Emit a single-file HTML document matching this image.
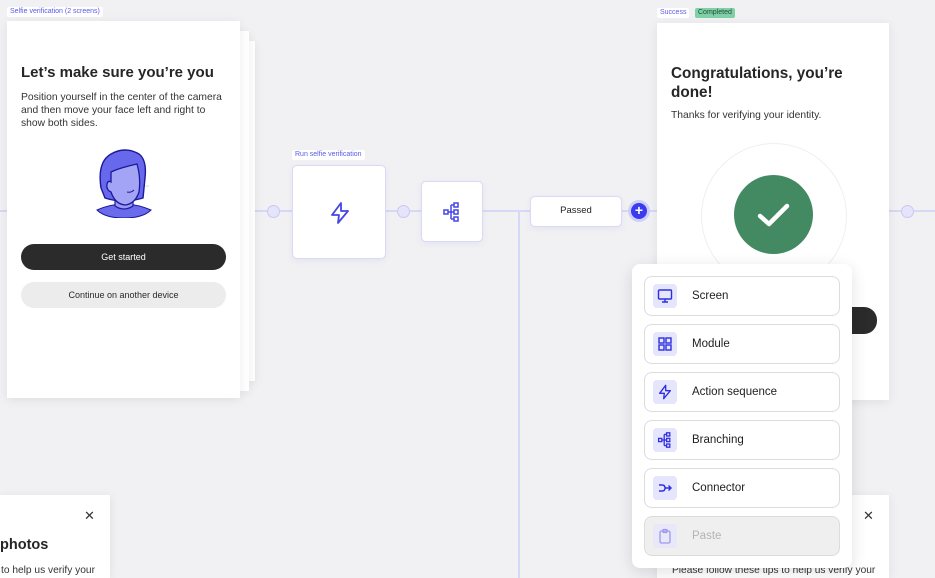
<!DOCTYPE html>
<html style="overflow:hidden;width:935px;height:578px"><head><meta charset="utf-8"><style>
*{margin:0;padding:0;box-sizing:border-box}
body{width:935px;height:578px;overflow:hidden;background:#f1f1f3;font-family:"Liberation Sans",sans-serif;position:relative;color:#2a2a2a}
.abs{position:absolute}
.card{position:absolute;background:#fff;box-shadow:0 2px 10px rgba(0,0,0,.08)}
.tag{position:absolute;font-size:7px;color:#5a5ae8;background:#fff;padding:1px 3px;border-radius:2px;line-height:8px}
.node{position:absolute;background:#fff;border:1.5px solid #d9d9f8;border-radius:5px;box-shadow:0 2px 6px rgba(80,80,200,.08)}
.dot{position:absolute;width:13px;height:13px;border-radius:50%;background:#e4e4fb;border:1px solid #c8c8f4}
.item{position:absolute;left:12px;width:196px;height:40px;border:1px solid #dcdcdc;border-radius:8px;background:#fff;font-size:11.5px;line-height:38px;padding-left:47px;color:#1e1e1e}
.ic{position:absolute;left:8px;top:7px;width:24px;height:24px;border-radius:4px;background:#e5e5fc}
.ic svg{position:absolute;left:4px;top:4px}
</style></head><body>
<div class="abs" style="left:0;top:210px;width:935px;height:1.5px;background:#d7d7f6"></div>
<div class="abs" style="left:518px;top:211px;width:1.5px;height:367px;background:#d7d7f6"></div>

<div class="card" style="left:248px;top:41px;width:7px;height:340px"></div>
<div class="card" style="left:240px;top:31px;width:9px;height:360px"></div>
<div class="tag" style="left:7px;top:7px">Selfie verification (2 screens)</div>
<div class="card" style="left:7px;top:21px;width:233px;height:377px">
 <div class="abs" style="left:14px;top:43px;font-size:15px;font-weight:bold;color:#262626">Let’s make sure you’re you</div>
 <div class="abs" style="left:14px;top:70px;width:210px;font-size:10.3px;line-height:13px;color:#333">Position yourself in the center of the camera and then move your face left and right to show both sides.</div>
 <svg class="abs" style="left:86px;top:127px" width="62" height="70" viewBox="0 0 62 70">
  <line x1="6" y1="38" x2="56" y2="38" stroke="#d8d8ee" stroke-width="1"/>
  <path d="M4 62 Q31 50 58 62 Q50 70 31 70 Q12 70 4 62Z" fill="#6a6aec" stroke="#1a1a9a" stroke-width="1"/>
  <path d="M22 48 L22 58 Q31 64 40 58 L40 48Z" fill="#9a9af5" stroke="#1a1a9a" stroke-width="1.2"/>
  <path d="M8 40 Q4 14 18 6 Q32 -2 46 6 Q54 12 52 30 L50 50 Q30 56 12 50 Z" fill="#6868ec" stroke="#1a1a9a" stroke-width="1.4"/>
  <path d="M18 24 Q26 20 44 16 Q48 30 46 44 Q42 56 32 57 Q22 56 18 44 Q13 42 14 36 Q15 32 18 34Z" fill="#a4a4f6" stroke="#1a1a9a" stroke-width="1.3"/>
  <path d="M34 44 Q38 45 41 42" stroke="#1a1a9a" fill="none" stroke-width="1"/>
 </svg>
 <div class="abs" style="left:14px;top:223px;width:205px;height:26px;border-radius:13px;background:#2b2b2b;color:#fff;font-size:9px;text-align:center;line-height:26px">Get started</div>
 <div class="abs" style="left:14px;top:261px;width:205px;height:26px;border-radius:13px;background:#ececec;color:#2a2a2a;font-size:9px;text-align:center;line-height:26px">Continue on another device</div>
</div>

<div class="dot" style="left:267px;top:205px"></div>
<div class="dot" style="left:397px;top:205px"></div>
<div class="dot" style="left:901px;top:205px"></div>

<div class="tag" style="left:292px;top:150px">Run selfie verification</div>
<div class="node" style="left:292px;top:165px;width:94px;height:94px">
 <svg class="abs" style="left:35px;top:35px" width="24" height="24" viewBox="0 0 24 24"><path d="M13 2 L4 14 H11 L10 22 L20 10 H13 Z" fill="none" stroke="#4545e6" stroke-width="1.8" stroke-linejoin="round"/></svg>
</div>
<div class="node" style="left:421px;top:181px;width:62px;height:61px">
 <svg class="abs" style="left:21px;top:20px" width="18" height="20" viewBox="0 0 18 20"><g fill="none" stroke="#4545e6" stroke-width="1.5"><rect x="1" y="8" width="4" height="4"/><rect x="11" y="1" width="4" height="4"/><rect x="11" y="8" width="4" height="4"/><rect x="11" y="15" width="4" height="4"/><path d="M5 10 H11 M8 3 V17 M8 3 H11 M8 17 H11"/></g></svg>
</div>
<div class="node" style="left:530px;top:196px;width:92px;height:31px;font-size:9.5px;text-align:center;line-height:28px;color:#222">Passed</div>
<div class="abs" style="left:628px;top:200px;width:22px;height:22px;border-radius:50%;background:#cfcffa"></div>
<div class="abs" style="left:631px;top:203px;width:16px;height:16px;border-radius:50%;background:#3a3aee;color:#fff;font-size:14px;line-height:15px;text-align:center;font-weight:bold">+</div>

<div class="tag" style="left:657px;top:8px">Success</div>
<div class="tag" style="left:695px;top:8px;background:#7fd0a6;color:#1f4a33">Completed</div>
<div class="card" style="left:657px;top:23px;width:232px;height:377px">
 <div class="abs" style="left:14px;top:41px;width:210px;font-size:15.3px;line-height:19px;font-weight:bold;color:#262626">Congratulations, you’re done!</div>
 <div class="abs" style="left:14px;top:87px;font-size:10.3px;color:#333">Thanks for verifying your identity.</div>
 <div class="abs" style="left:44px;top:120px;width:146px;height:146px;border-radius:50%;border:1px solid #eeeef4"></div>
 <div class="abs" style="left:77px;top:152px;width:79px;height:79px;border-radius:50%;background:#438a63"></div>
 <svg class="abs" style="left:100px;top:178px" width="34" height="28" viewBox="0 0 34 28"><path d="M3 15 L12 23 L30 5" fill="none" stroke="#fff" stroke-width="4.5" stroke-linecap="round" stroke-linejoin="round"/></svg>
 <div class="abs" style="left:150px;top:284px;width:70px;height:27px;border-radius:13px;background:#2b2b2b"></div>
</div>

<div class="card" style="left:0;top:495px;width:110px;height:83px">
 <div class="abs" style="left:84px;top:13px;font-size:13px;color:#333">✕</div>
 <div class="abs" style="left:0;top:42px;font-size:14.5px;font-weight:bold;color:#262626">photos</div>
 <div class="abs" style="left:1px;top:70px;font-size:10.2px;color:#333;white-space:nowrap">to help us verify your</div>
</div>
<div class="card" style="left:657px;top:495px;width:232px;height:83px">
 <div class="abs" style="left:206px;top:13px;font-size:13px;color:#333">✕</div>
 <div class="abs" style="left:15px;top:70px;font-size:10.2px;color:#333;white-space:nowrap">Please follow these tips to help us verify your</div>
</div>

<div class="abs" style="left:632px;top:264px;width:220px;height:304px;background:#fff;border-radius:8px;box-shadow:0 4px 16px rgba(0,0,0,.12)">
 <div class="item" style="top:12px"><div class="ic"><svg width="16" height="16" viewBox="0 0 16 16" fill="none" stroke="#2e2ee0" stroke-width="1.4"><rect x="1.5" y="2" width="13" height="9" rx="1"/><path d="M8 11 V14 M5 14 H11"/></svg></div>Screen</div>
 <div class="item" style="top:60px"><div class="ic"><svg width="16" height="16" viewBox="0 0 16 16" fill="none" stroke="#2e2ee0" stroke-width="1.4"><rect x="2" y="2" width="5" height="5"/><rect x="9" y="2" width="5" height="5"/><rect x="2" y="9" width="5" height="5"/><rect x="9" y="9" width="5" height="5"/></svg></div>Module</div>
 <div class="item" style="top:108px"><div class="ic"><svg width="16" height="16" viewBox="0 0 24 24"><path d="M13 2 L4 14 H11 L10 22 L20 10 H13 Z" fill="none" stroke="#2e2ee0" stroke-width="2" stroke-linejoin="round"/></svg></div>Action sequence</div>
 <div class="item" style="top:156px"><div class="ic"><svg width="16" height="16" viewBox="0 0 18 20"><g fill="none" stroke="#2e2ee0" stroke-width="1.6"><rect x="1" y="8" width="4" height="4"/><rect x="11" y="1" width="4" height="4"/><rect x="11" y="8" width="4" height="4"/><rect x="11" y="15" width="4" height="4"/><path d="M5 10 H11 M8 3 V17 M8 3 H11 M8 17 H11"/></g></svg></div>Branching</div>
 <div class="item" style="top:204px"><div class="ic"><svg width="16" height="16" viewBox="0 0 16 16" fill="none" stroke="#2e2ee0" stroke-width="1.4"><path d="M2 5 H5 Q8 5 8 8 Q8 11 5 11 H2 M8 8 H14 M11.5 5.5 L14 8 L11.5 10.5"/></svg></div>Connector</div>
 <div class="item" style="top:252px;background:#efefef;color:#b4b4b4"><div class="ic" style="background:#e8e8f8"><svg width="16" height="16" viewBox="0 0 16 16" fill="none" stroke="#9a9aee" stroke-width="1.3"><rect x="3" y="3" width="10" height="12" rx="1.5"/><rect x="6" y="1.5" width="4" height="3" rx=".5"/></svg></div>Paste</div>
</div>
</body></html>
